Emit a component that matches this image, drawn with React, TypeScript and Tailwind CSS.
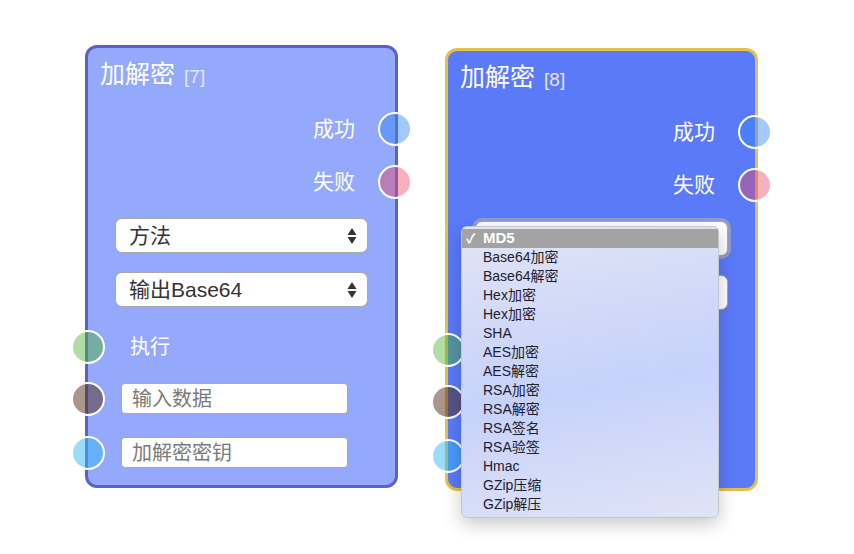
const FONT = "font-['Liberation_Sans','Noto_Sans_CJK_SC',sans-serif]";

const options = [
  "MD5",
  "Base64加密",
  "Base64解密",
  "Hex加密",
  "Hex加密",
  "SHA",
  "AES加密",
  "AES解密",
  "RSA加密",
  "RSA解密",
  "RSA签名",
  "RSA验签",
  "Hmac",
  "GZip压缩",
  "GZip解压",
];

function Port({ side, color }: { side: "left" | "right"; color: string }) {
  return (
    <span
      className={`absolute top-1/2 -translate-y-1/2 w-[34px] h-[34px] rounded-full border-2 border-white ${color} ${
        side === "right" ? "right-[-17px]" : "left-[-17px]"
      }`}
    />
  );
}

function Arrows({ faded }: { faded?: boolean }) {
  return (
    <svg width="10" height="20" viewBox="0 0 10 20" className={faded ? "opacity-40" : ""}>
      <path d="M5 2 L9.5 9 L0.5 9 Z" fill="#333" />
      <path d="M5 18 L9.5 11 L0.5 11 Z" fill="#333" />
    </svg>
  );
}

function Select({ label, focused }: { label: string; focused?: boolean }) {
  return (
    <div
      className={`h-[35px] flex items-center justify-between pl-[13px] pr-[10px] bg-white rounded-[7px] border border-[#a8a8a8] text-[21px] text-[#333] ${
        focused ? "shadow-[0_0_0_3px_rgba(170,170,190,0.7)]" : ""
      }`}
    >
      <span>{label}</span>
      <Arrows faded={focused} />
    </div>
  );
}

function Node({
  id,
  frame,
  bg,
  children,
}: {
  id: number;
  frame: string;
  bg: string;
  children?: React.ReactNode;
}) {
  return (
    <div className={`relative w-[313px] h-[443px] rounded-[12px] border-[3px] ${frame} ${bg} px-[12px] pt-[11px] flex flex-col`}>
      <div className="h-[30px] flex items-baseline gap-[9px] text-white">
        <span className="text-[25px] leading-[30px]">加解密</span>
        <span className="text-[19px] text-[#e4e8ff] font-light">[{id}]</span>
      </div>

      <div className="mt-[13px] relative h-[53px] flex items-center justify-end pr-[40px] text-[21px] text-white -mr-[12px]">
        成功
        <Port side="right" color="bg-[rgba(50,135,245,0.45)]" />
      </div>
      <div className="relative h-[53px] flex items-center justify-end pr-[40px] text-[21px] text-white -mr-[12px]">
        失败
        <Port side="right" color="bg-[rgba(235,70,95,0.42)]" />
      </div>

      <div className="mt-[10px] ml-[15px] mr-[15px]">
        <Select label="方法" focused={id === 8} />
      </div>
      <div className="mt-[19px] ml-[15px] mr-[15px]">
        <Select label="输出Base64" />
      </div>

      <div className="mt-[13px] relative h-[53px] flex items-center pl-[42px] text-[20px] text-white -ml-[12px]">
        执行
        <Port side="left" color="bg-[rgba(80,180,55,0.45)]" />
      </div>

      <div className="mt-[10px] relative h-[31px] -ml-[12px]">
        <Port side="left" color="bg-[rgba(85,45,25,0.5)]" />
        <div className="ml-[33px] w-[227px] h-[31px] bg-white border border-[#a8a8a8] rounded-[4px] flex items-center pl-[10px] text-[20px] text-[#7a7a7a]">
          输入数据
        </div>
      </div>
      <div className="mt-[23px] relative h-[31px] -ml-[12px]">
        <Port side="left" color="bg-[rgba(55,185,245,0.5)]" />
        <div className="ml-[33px] w-[227px] h-[31px] bg-white border border-[#a8a8a8] rounded-[4px] flex items-center pl-[10px] text-[20px] text-[#7a7a7a]">
          加解密密钥
        </div>
      </div>
      {children}
    </div>
  );
}

function Dropdown() {
  return (
    <div className="absolute left-[13px] top-[175px] w-[258px] h-[292px] rounded-[6px] border border-[#c4c6d2] bg-[linear-gradient(170deg,#e2e5f4_0%,#cfd8f8_35%,#c6d2fb_55%,#dfe3f5_100%)] shadow-[0_6px_18px_rgba(0,0,0,0.22)] pt-[2px] text-[14px] text-[#1e2030] z-10">
      {options.map((o, i) =>
        i === 0 ? (
          <div key={i} className="h-[19px] bg-[#a3a3a3] text-white font-bold flex items-center pl-[4px]">
            <span className="w-[17px] text-[13px]">✓</span>
            <span className="text-[15px]">{o}</span>
          </div>
        ) : (
          <div key={i} className="h-[19px] flex items-center pl-[21px]">
            {o}
          </div>
        )
      )}
    </div>
  );
}

export default function App() {
  return (
    <div className={`w-[854px] h-[554px] bg-white ${FONT}`}>
      <div className="flex items-start gap-[47px] pl-[85px] pt-[45px]">
        <Node id={7} frame="border-[#5a63c4]" bg="bg-[#94a8fc]" />
        <div className="mt-[3px]">
          <Node id={8} frame="border-[#e2c24a]" bg="bg-[#5b7afa]">
            <Dropdown />
          </Node>
        </div>
      </div>
    </div>
  );
}
